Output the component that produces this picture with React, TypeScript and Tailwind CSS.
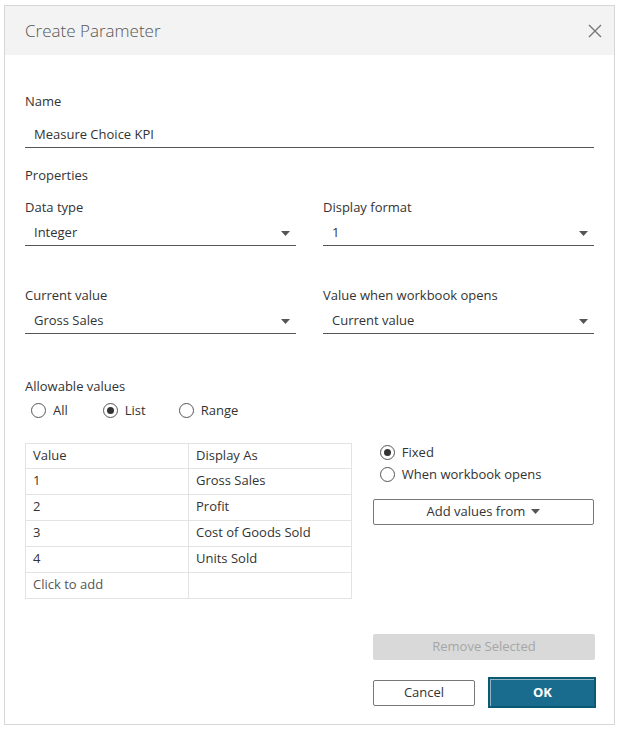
import React from "react";

function Caret() {
  return (
    <svg width="9" height="5" viewBox="0 0 9 5" className="shrink-0">
      <path d="M0 0 L9 0 L4.5 5 Z" fill="#555" />
    </svg>
  );
}

function Radio({ checked }: { checked?: boolean }) {
  return (
    <span className="w-[15px] h-[15px] rounded-full border border-[#555] flex items-center justify-center shrink-0 bg-white">
      {checked && <span className="w-[7px] h-[7px] rounded-full bg-[#333]" />}
    </span>
  );
}

function Select({ label, value }: { label: string; value: string }) {
  return (
    <div className="flex flex-col">
      <div className="text-[13px] text-[#333] leading-[16px] h-[16px]">{label}</div>
      <div className="mt-[9px] h-[22px] border-b border-[#555] flex items-center justify-between pl-[9px] pr-[6px] pb-[3px]">
        <span className="text-[13px] text-[#333]">{value}</span>
        <Caret />
      </div>
    </div>
  );
}

const rows = [
  ["1", "Gross Sales"],
  ["2", "Profit"],
  ["3", "Cost of Goods Sold"],
  ["4", "Units Sold"],
];

export default function App() {
  return (
    <div className="w-[620px] h-[731px] bg-white pt-[5px] pl-[4px]" style={{ fontFamily: "'Open Sans', Lato, sans-serif" }}>
      <div className="w-[611px] h-[720px] border border-[#d6d6d6] flex flex-col">
        <div className="h-[49px] bg-[#f3f3f3] flex items-center justify-between pl-[20px] pr-[12px] shrink-0">
          <span className="text-[17px] text-[#555] font-light">Create Parameter</span>
          <svg width="14" height="14" viewBox="0 0 14 14">
            <path d="M1 1 L13 13 M13 1 L1 13" stroke="#777" strokeWidth="1.4" />
          </svg>
        </div>
        <div className="flex-1 px-[20px] pt-[38px] flex flex-col">
          <div className="text-[13px] text-[#333] leading-[16px]">Name</div>
          <div className="mt-[17px] h-[22px] border-b border-[#555] pl-[9px] text-[13px] text-[#333] flex items-start leading-[16px]">
            Measure Choice KPI
          </div>
          <div className="mt-[19px] text-[13px] text-[#333] leading-[16px]">Properties</div>
          <div className="mt-[16px] grid grid-cols-[271px_271px] gap-x-[27px]">
            <Select label="Data type" value="Integer" />
            <Select label="Display format" value="1" />
          </div>
          <div className="mt-[41px] grid grid-cols-[271px_271px] gap-x-[27px]">
            <Select label="Current value" value="Gross Sales" />
            <Select label="Value when workbook opens" value="Current value" />
          </div>
          <div className="mt-[44px] text-[13px] text-[#333] leading-[16px]">Allowable values</div>
          <div className="mt-[7px] flex items-center pl-[6px] text-[13px] text-[#333]">
            <span className="flex items-center gap-[7px]"><Radio /> All</span>
            <span className="flex items-center gap-[7px] ml-[35px]"><Radio checked /> List</span>
            <span className="flex items-center gap-[7px] ml-[33px]"><Radio /> Range</span>
          </div>
          <div className="mt-[22px] flex">
            <div className="w-[328px] border border-[#e3e3e3] text-[13px] text-[#333]">
              <div className="grid grid-cols-[163px_1fr] h-[25px] border-b border-[#e3e3e3]">
                <div className="border-r border-[#e3e3e3] pl-[7px] flex items-center">Value</div>
                <div className="pl-[7px] flex items-center">Display As</div>
              </div>
              {rows.map(([v, d]) => (
                <div key={v} className="grid grid-cols-[163px_1fr] h-[26px] border-b border-[#e3e3e3]">
                  <div className="border-r border-[#e3e3e3] pl-[7px] flex items-center">{v}</div>
                  <div className="pl-[7px] flex items-center">{d}</div>
                </div>
              ))}
              <div className="grid grid-cols-[163px_1fr] h-[25px]">
                <div className="border-r border-[#e3e3e3] pl-[7px] flex items-center text-[#555]">Click to add</div>
                <div />
              </div>
            </div>
            <div className="ml-[21px] w-[222px] flex flex-col">
              <div className="mt-[1px] flex items-center gap-[7px] pl-[7px] text-[13px] text-[#333] h-[18px]">
                <Radio checked /> Fixed
              </div>
              <div className="mt-[4px] flex items-center gap-[7px] pl-[7px] text-[13px] text-[#333] h-[18px]">
                <Radio /> When workbook opens
              </div>
              <div className="mt-[15px] h-[26px] border border-[#777] rounded-[2px] flex items-center justify-center gap-[6px] text-[13px] text-[#333]">
                Add values from <Caret />
              </div>
            </div>
          </div>
          <div className="flex-1" />
          <div className="flex flex-col items-end -mr-[2px]">
            <div className="w-[222px] mr-[1px] h-[26px] bg-[#d9d9d9] rounded-[2px] flex items-center justify-center text-[13px] text-[#a6a6a6]">
              Remove Selected
            </div>
            <div className="mt-[17px] flex items-center w-[223px]">
              <div className="w-[102px] h-[26px] border border-[#777] rounded-[2px] flex items-center justify-center text-[13px] text-[#333]">
                Cancel
              </div>
              <div className="ml-[13px] w-[108px] h-[31px] bg-[#0b5a73] p-[2px] flex">
                <div className="flex-1 bg-[#1a6c8f] border-l border-t border-[#8fb5c6] flex items-center justify-center text-[13px] font-bold text-white">
                  OK
                </div>
              </div>
            </div>
          </div>
          <div className="h-[16px] shrink-0" />
        </div>
      </div>
    </div>
  );
}
